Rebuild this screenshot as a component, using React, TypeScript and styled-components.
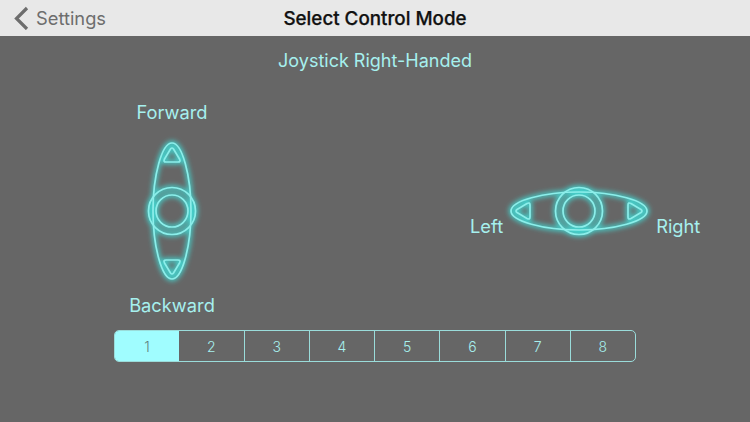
import styled, { createGlobalStyle } from 'styled-components';

const GlobalStyle = createGlobalStyle`
  html, body {
    margin: 0;
    padding: 0;
    background-color: #666666;
  }
  body {
    font-family: Inter, "Liberation Sans", sans-serif;
  }
`;

const Screen = styled.div`
  width: 750px;
  height: 422px;
  display: flex;
  flex-direction: column;
  overflow: hidden;
  background-color: #666666;
`;

const NavBar = styled.div`
  height: 36px;
  flex: none;
  display: grid;
  grid-template-columns: 1fr auto 1fr;
  align-items: center;
  background-color: #e8e8e8;
`;

const BackLink = styled.div`
  display: flex;
  align-items: center;
  gap: 7px;
  padding-left: 13px;
  font-size: 18.3px;
  color: #6d6d6d;
`;

const NavTitle = styled.div`
  font-size: 18.8px;
  font-weight: 500;
  color: #111111;
  -webkit-text-stroke: 0.25px #111111;
`;

const Main = styled.div`
  flex: 1;
  display: flex;
  flex-direction: column;
  align-items: center;
  color: #a6f0ee;
`;

const ModeTitle = styled.div`
  margin-top: 15px;
  height: 20px;
  line-height: 20px;
  font-size: 18px;
`;

const Stage = styled.div`
  width: 100%;
  height: 256px;
  display: flex;
`;

const VerticalControl = styled.div`
  width: 100px;
  margin-left: 122px;
  display: flex;
  flex-direction: column;
  align-items: center;
  padding-top: 31px;
`;

const HorizontalControl = styled.div`
  margin-left: 248px;
  margin-top: 110px;
  height: 60px;
  display: flex;
  align-items: flex-start;
  gap: 1px;
`;

const Label = styled.div<{ $top?: number; $left?: number }>`
  height: 20px;
  line-height: 20px;
  font-size: 18.3px;
  white-space: nowrap;
  margin-top: ${({ $top }) => $top ?? 0}px;
  margin-left: ${({ $left }) => $left ?? 0}px;
`;

const JoystickSvg = styled.svg<{ $top?: number }>`
  display: block;
  flex: none;
  overflow: visible;
  margin-top: ${({ $top }) => $top ?? 0}px;
`;

const Segments = styled.div`
  width: 520px;
  height: 30px;
  margin-top: 3px;
  display: flex;
  border: 1px solid #9adcda;
  border-radius: 5px;
  overflow: hidden;
`;

const Segment = styled.div<{ $active?: boolean }>`
  flex: 1;
  display: flex;
  align-items: center;
  justify-content: center;
  font-size: 14px;
  font-weight: 300;
  color: ${({ $active }) => ($active ? '#5f7f80' : '#a6f0ee')};
  background-color: ${({ $active }) => ($active ? '#a0fdff' : 'transparent')};
  border-left: ${({ $active }) => ($active ? 'none' : '1px solid #9adcda')};

  &:nth-child(2) {
    border-left: none;
  }
`;

const Joystick = ({ id, horizontal, top }: { id: string; horizontal?: boolean; top?: number }) => {
  const width = horizontal ? 150 : 60;
  const height = horizontal ? 60 : 150;
  const shapes = (
    <>
      <path d="M0 -68 C 10 -68 19 -36 19 0 C 19 36 10 68 0 68 C -10 68 -19 36 -19 0 C -19 -36 -10 -68 0 -68 Z" />
      <path d="M-1.5 -62 Q 0 -64 1.5 -62 L 7.5 -52 Q 9 -49 6 -49 L -6 -49 Q -9 -49 -7.5 -52 Z" />
      <path d="M-1.5 62 Q 0 64 1.5 62 L 7.5 52 Q 9 49 6 49 L -6 49 Q -9 49 -7.5 52 Z" />
      <circle r="23.5" />
      <circle r="16" />
    </>
  );

  return (
    <JoystickSvg $top={top} width={width} height={height} viewBox={`0 0 ${width} ${height}`}>
      <defs>
        <filter id={id} x="-40%" y="-40%" width="180%" height="180%">
          <feGaussianBlur stdDeviation="2.8" />
        </filter>
      </defs>
      <g transform={`translate(${width / 2} ${height / 2}) rotate(${horizontal ? 90 : 0})`}>
        <g fill="none" stroke="#45cfca" strokeWidth="4.5" strokeLinejoin="round" filter={`url(#${id})`}>
          {shapes}
        </g>
        <g fill="none" stroke="#8ceeea" strokeWidth="1.7" strokeLinejoin="round">
          {shapes}
        </g>
      </g>
    </JoystickSvg>
  );
};

const App = () => {
  return (
    <Screen>
      <GlobalStyle />
      <NavBar>
        <BackLink>
          <svg width="16" height="24" viewBox="0 0 16 24" fill="none">
            <path d="M14 2 L3.5 12.5 L14 23" stroke="#6d6d6d" strokeWidth="3.2" />
          </svg>
          Settings
        </BackLink>
        <NavTitle>Select Control Mode</NavTitle>
      </NavBar>
      <Main>
        <ModeTitle>Joystick Right-Handed</ModeTitle>
        <Stage>
          <VerticalControl>
            <Label>Forward</Label>
            <Joystick id="glow-vertical" top={14} />
            <Label $top={9}>Backward</Label>
          </VerticalControl>
          <HorizontalControl>
            <Label $top={35}>Left</Label>
            <Joystick id="glow-horizontal" horizontal />
            <Label $top={35} $left={1}>
              Right
            </Label>
          </HorizontalControl>
        </Stage>
        <Segments>
          {[1, 2, 3, 4, 5, 6, 7, 8].map((n) => (
            <Segment key={n} $active={n === 1}>
              {n}
            </Segment>
          ))}
        </Segments>
      </Main>
    </Screen>
  );
};

export default App;
